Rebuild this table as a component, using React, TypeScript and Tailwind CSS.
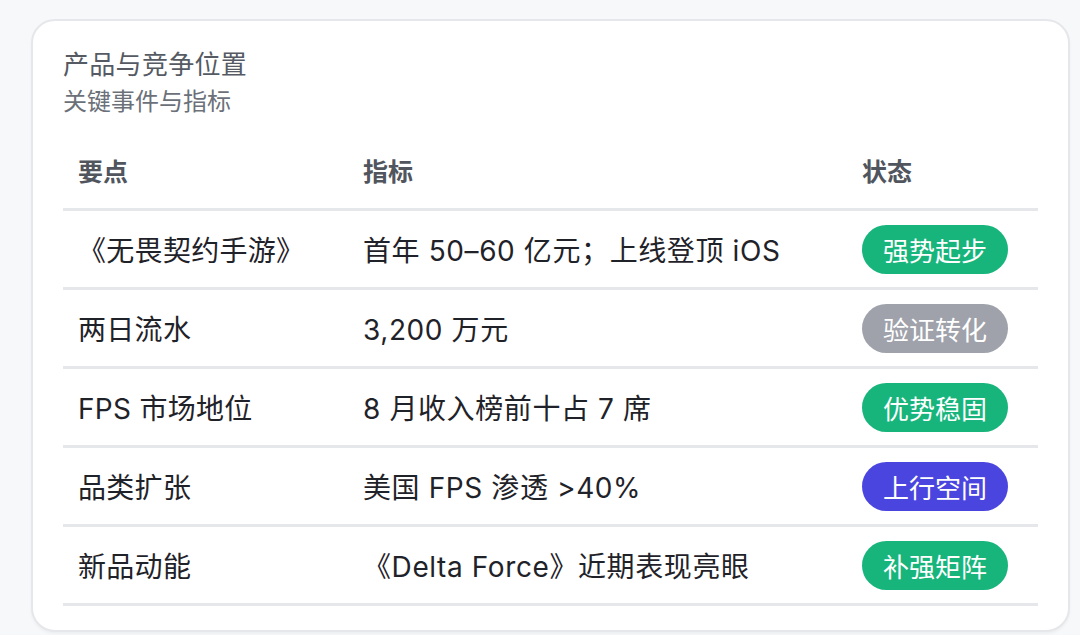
import React from "react";

type Row = { point: string; metric: string; status: string; tone: "green" | "gray" | "indigo" };

const rows: Row[] = [
  { point: "《无畏契约手游》", metric: "首年 50–60 亿元；上线登顶 iOS", status: "强势起步", tone: "green" },
  { point: "两日流水", metric: "3,200 万元", status: "验证转化", tone: "gray" },
  { point: "FPS 市场地位", metric: "8 月收入榜前十占 7 席", status: "优势稳固", tone: "green" },
  { point: "品类扩张", metric: "美国 FPS 渗透 >40%", status: "上行空间", tone: "indigo" },
  { point: "新品动能", metric: "《Delta Force》近期表现亮眼", status: "补强矩阵", tone: "green" },
];

const toneClass: Record<Row["tone"], string> = {
  green: "bg-[#17b57c]",
  gray: "bg-[#9fa2ab]",
  indigo: "bg-[#4b45df]",
};

export default function App() {
  return (
    <div
      className="min-h-[635px] w-[1080px] bg-[#f7f8fa] pl-[31px] pr-[10px] pt-[19px] pb-[3px]"
      style={{ fontFamily: "Inter, 'Noto Sans CJK SC', sans-serif" }}
    >
      <div className="rounded-[24px] border-2 border-[#e6e7ea] bg-white pl-[30px] pr-[30px] pt-[27px] pb-[24px] shadow-[0_2px_3px_rgba(0,0,0,0.04)]">
        <div className="text-[26px] leading-[34px] tracking-[0.3px] text-[#555a63]">产品与竞争位置</div>
        <div className="mt-[5px] text-[24px] leading-[30px] text-[#6b7079]">关键事件与指标</div>
        <div className="mt-[17px]">
          <div className="grid grid-cols-[285px_499px_1fr] border-b-[3px] border-[#e6e7ea]">
            <div className="flex h-[74px] items-center pl-[15px] pt-[4px] text-[25px] font-semibold text-[#50555e]">要点</div>
            <div className="flex h-[74px] items-center pl-[15px] pt-[4px] text-[25px] font-semibold text-[#50555e]">指标</div>
            <div className="flex h-[74px] items-center pl-[15px] pt-[4px] text-[25px] font-semibold text-[#50555e]">状态</div>
          </div>
          {rows.map((r) => (
            <div key={r.point} className="grid grid-cols-[285px_499px_1fr] border-b-[3px] border-[#e6e7ea]">
              <div className="flex h-[76px] items-center pl-[15px] pt-[4px] text-[28px] tracking-[0.3px] text-[#1f2329] whitespace-nowrap">{r.point}</div>
              <div className="flex h-[76px] items-center pl-[15px] pt-[4px] text-[28px] tracking-[0.6px] text-[#1f2329] whitespace-nowrap">{r.metric}</div>
              <div className="flex h-[76px] items-center pl-[15px] pt-[1px]">
                <span
                  className={`${toneClass[r.tone]} inline-flex h-[49px] items-center rounded-full px-[21px] pt-[3px] text-[26px] text-white`}
                >
                  {r.status}
                </span>
              </div>
            </div>
          ))}
        </div>
      </div>
    </div>
  );
}
